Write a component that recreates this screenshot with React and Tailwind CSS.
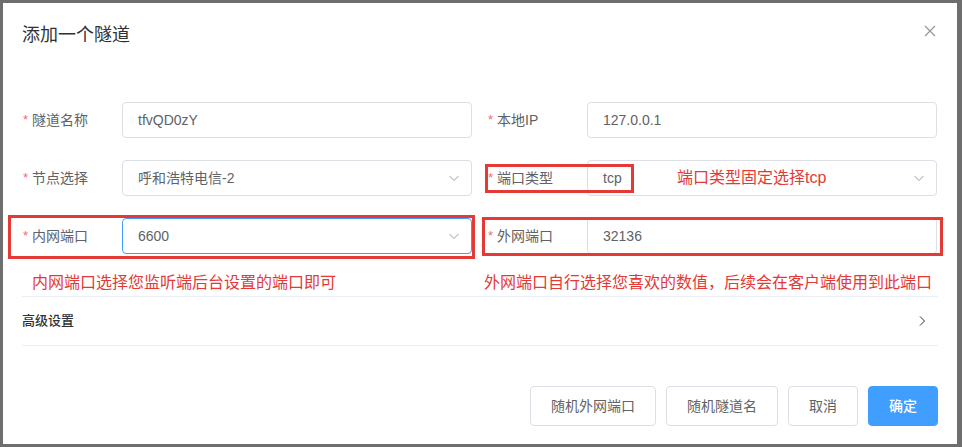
import React from "react";

const FONT = { fontFamily: '"Liberation Sans", Arial, "Noto Sans CJK SC", sans-serif' };

function ChevronDown() {
  return (
    <svg width="14" height="14" viewBox="0 0 14 14" fill="none">
      <path d="M2.5 5 L7 9.5 L11.5 5" stroke="#c0c4cc" strokeWidth="1.1" />
    </svg>
  );
}

function ChevronRight() {
  return (
    <svg width="12" height="12" viewBox="0 0 12 12" fill="none">
      <path d="M4 1.5 L8.5 6 L4 10.5" stroke="#303133" strokeWidth="1" />
    </svg>
  );
}

function Label({ children }) {
  return (
    <div className="w-[100px] shrink-0 flex items-center text-[14px] text-[#606266]">
      <span className="text-[#f56c6c] ml-[1px] mr-[4px] text-[13px]">*</span>
      <span>{children}</span>
    </div>
  );
}

function Field({ label, value, select, focused, overlay, extra }) {
  return (
    <div className="relative flex h-[36px]">
      <Label>{label}</Label>
      <div
        className={
          "relative flex-1 flex items-center rounded-[4px] border bg-white pl-[15px] pr-[10px] text-[14px] text-[#606266] " +
          (focused ? "border-[#409eff]" : "border-[#dcdfe6]")
        }
      >
        <span className="flex-1">{value}</span>
        {extra}
        {select && <ChevronDown />}
      </div>
      {overlay}
    </div>
  );
}

function Btn({ children, primary }) {
  return (
    <button
      className={
        "h-[40px] px-[20px] rounded-[4px] text-[14px] border " +
        (primary
          ? "bg-[#409eff] border-[#409eff] text-white font-medium"
          : "bg-white border-[#dcdfe6] text-[#606266]")
      }
    >
      {children}
    </button>
  );
}

export default function App() {
  return (
    <div className="w-[962px] h-[447px] bg-[#6e6e6e] pl-[3px] pt-[3px] overflow-hidden" style={FONT}>
      <div className="relative w-[954px] h-[441px] bg-white">
        {/* header */}
        <div className="px-[19px] pt-[20px]">
          <div className="text-[18px] leading-[24px] text-[#303133]">添加一个隧道</div>
        </div>
        <button className="absolute right-[21px] top-[22px] w-[12px] h-[12px]">
          <svg width="12" height="12" viewBox="0 0 12 12" fill="none">
            <path d="M1 1 L11 11 M11 1 L1 11" stroke="#909399" strokeWidth="1.1" />
          </svg>
        </button>

        {/* form */}
        <div className="px-[19px] pt-[55px]">
          <div className="grid grid-cols-[450px_450px] gap-x-[15px] gap-y-[22px]">
            <Field label="隧道名称" value="tfvQD0zY" />
            <Field label="本地IP" value="127.0.0.1" />
            <Field label="节点选择" value="呼和浩特电信-2" select />
            <Field
              label="端口类型"
              value="tcp"
              select
              extra={
                <span className="absolute left-[89px] top-1/2 -translate-y-1/2 text-[16px] text-[#e53935]">
                  端口类型固定选择tcp
                </span>
              }
              overlay={
                <div className="absolute left-[-2px] top-[4px] w-[149px] h-[29px] border-[3px] border-[#e53935]" />
              }
            />
            <Field
              label="内网端口"
              value="6600"
              select
              focused
              overlay={
                <div className="absolute left-[-14px] top-[-3px] w-[467px] h-[44px] border-[3px] border-[#e53935]" />
              }
            />
            <Field
              label="外网端口"
              value="32136"
              overlay={
                <div className="absolute left-[-5px] top-[-1px] w-[461px] h-[39px] border-[3px] border-[#e53935]" />
              }
            />
          </div>

          {/* annotations */}
          <div className="grid grid-cols-[450px_450px] gap-x-[15px] h-[42px] pt-[18px]">
            <div className="pl-[10px] text-[16px] leading-[22px] text-[#e53935] whitespace-nowrap">
              内网端口选择您监听端后台设置的端口即可
            </div>
            <div className="ml-[-3px] text-[16px] leading-[22px] text-[#e53935] whitespace-nowrap">
              外网端口自行选择您喜欢的数值，后续会在客户端使用到此端口
            </div>
          </div>

          {/* collapse */}
          <div className="border-t border-b border-[#ebeef5] h-[50px] flex items-center justify-between pr-[10px]">
            <span className="text-[13px] font-medium text-[#303133]">高级设置</span>
            <ChevronRight />
          </div>
        </div>

        {/* footer */}
        <div className="px-[19px] pt-[40px] flex justify-end gap-[10px]">
          <Btn>随机外网端口</Btn>
          <Btn>随机隧道名</Btn>
          <Btn>取消</Btn>
          <Btn primary>确定</Btn>
        </div>
      </div>
    </div>
  );
}
